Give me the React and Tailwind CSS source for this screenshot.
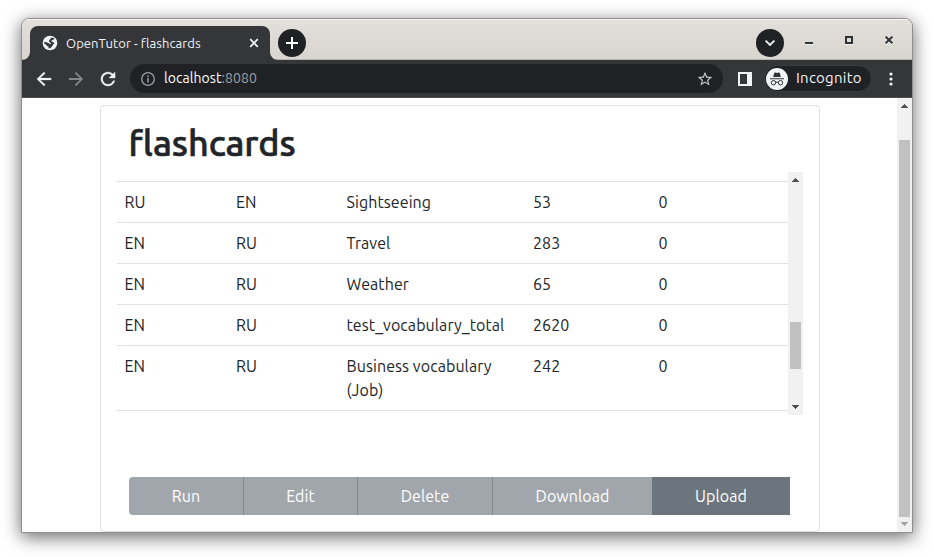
import React from "react";

const rows = [
  ["RU", "EN", "Sightseeing", "53", "0"],
  ["EN", "RU", "Travel", "283", "0"],
  ["EN", "RU", "Weather", "65", "0"],
  ["EN", "RU", "test_vocabulary_total", "2620", "0"],
  ["EN", "RU", "Business vocabulary (Job)", "242", "0"],
];

function Arrow({ down, className }) {
  return (
    <svg width="7" height="4" viewBox="0 0 7 4" className={className} shapeRendering="crispEdges">
      <path d={down ? "M0 0h7v1H0zM1 1h5v1H1zM2 2h3v1H2zM3 3h1v1H3z" : "M3 0h1v1H3zM2 1h3v1H2zM1 2h5v1H1zM0 3h7v1H0z"} fill="currentColor" />
    </svg>
  );
}

function TabStrip() {
  return (
    <div className="flex h-[41px] items-end bg-linear-to-b from-[#e3e0dc] to-[#d8d4ce] shadow-[inset_0_1px_0_#f5f4f2,inset_0_-1px_0_#bdb5ae]">
      <svg width="8" height="8" className="shrink-0"><path d="M8 0v8H0a8 8 0 0 0 8-8z" fill="#35363a" /></svg>
      <div className="flex h-[34px] w-[240px] items-center rounded-t-lg bg-[#35363a] pl-[12px] pr-[11px] text-[#f1f3f4]">
        <svg width="16" height="16" viewBox="0 0 16 16">
          <circle cx="8" cy="8" r="7.300" fill="#f1f3f4" />
          <path d="M9 2.400L12.400 3.300 11.800 4.600 9.600 5.400 9.300 6.600 11.600 7.200 12.300 8.500 11 9.500 10 11.600 8.200 13.200 6.200 13.200 6.800 11.800 5.400 11.200 4 9.800 2.200 8.400 2.400 6.800 5.200 7.600 8.400 9.200 9 8.300 7.200 6.900 7.200 5 8.600 4z" fill="#35363a" />
        </svg>
        <span className="ml-2 whitespace-nowrap text-[13px] leading-4 tracking-[0.08px]">OpenTutor - flashcards</span>
        <svg width="10" height="10" viewBox="0 0 10 10" className="ml-auto" stroke="#f1f3f4" strokeWidth="1.700"><path d="M1.200 1.200l7.600 7.600M8.800 1.200L1.200 8.800" /></svg>
      </div>
      <svg width="8" height="8" className="shrink-0"><path d="M0 0v8h8a8 8 0 0 1-8-8z" fill="#35363a" /></svg>
      <div className="mb-[3px] flex size-7 items-center justify-center rounded-full bg-[#202124]">
        <svg width="12" height="12" viewBox="0 0 12 12" stroke="#fff" strokeWidth="2"><path d="M6 0v12M0 6h12" /></svg>
      </div>
      <div className="mr-[21px] mb-[3px] ml-auto flex size-7 items-center justify-center rounded-full bg-[#202124]">
        <svg width="10" height="6" viewBox="0 0 10 6" fill="none" stroke="#f1f3f4" strokeWidth="1.800"><path d="M.6.6L5 5 9.400.6" /></svg>
      </div>
      <div className="mr-[19px] mb-[15px] flex w-[88px] justify-between">
        <svg width="8" height="9" shapeRendering="crispEdges"><path d="M0 6h8v2H0z" fill="#2e3436" /><path d="M0 8h8v1H0z" fill="#f5f3f1" /></svg>
        <svg width="8" height="9" shapeRendering="crispEdges"><path d="M0 8h8v1H0z" fill="#f5f3f1" /><rect x="1" y="1" width="6" height="6" fill="none" stroke="#2e3436" strokeWidth="2" /></svg>
        <svg width="8" height="9" stroke="#2e3436" strokeWidth="2"><path d="M.6 1.600l6.800 6.800M7.400 1.600L.6 8.400" stroke="#f5f3f1" /><path d="M.6.6l6.800 6.800M7.400.6L.6 7.400" /></svg>
      </div>
    </div>
  );
}

function Toolbar() {
  return (
    <div className="flex h-[38px] items-center border-b border-[#4c4d50] bg-[#35363a] pl-[14px]">
      <svg width="16" height="16" viewBox="3 3 18 18" fill="#f1f3f4" stroke="#f1f3f4" strokeWidth=".3"><path d="M20 11H7.830l5.590-5.590L12 4l-8 8 8 8 1.410-1.410L7.830 13H20v-2z" /></svg>
      <svg width="16" height="16" viewBox="3 3 18 18" fill="#86878a" className="ml-4"><path d="M12 4l-1.410 1.410L16.170 11H4v2h12.170l-5.580 5.590L12 20l8-8z" /></svg>
      <svg width="16" height="16" viewBox="3 3 18 18" fill="#f1f3f4" stroke="#f1f3f4" strokeWidth=".3" className="ml-4"><path d="M17.650 6.350A7.958 7.958 0 0 0 12 4a8 8 0 1 0 7.730 10h-2.080A5.990 5.990 0 0 1 12 18a6 6 0 1 1 0-12c1.660 0 3.140.69 4.220 1.780L13 11h7V4l-2.350 2.350z" /></svg>
      <div className="ml-[14px] flex h-[29px] w-[593px] items-center rounded-full bg-[#202124] pr-[10px] pl-[11px]">
        <svg width="14" height="14" viewBox="0 0 14 14" fill="none" stroke="#9aa0a6"><circle cx="7" cy="7" r="6.300" strokeWidth="1.300" /><path d="M7 6v4.500M7 3.400v1.500" strokeWidth="1.500" /></svg>
        <span className="mb-[2px] ml-[9px] whitespace-nowrap text-[14px] leading-5 tracking-[0.07px] text-white">localhost<span className="text-[#9aa0a6]">:8080</span></span>
        <svg width="16" height="16" viewBox="1 1 22 22" className="ml-auto" fill="#c3c5c8"><path d="M22 9.240l-7.190-.62L12 2 9.190 8.630 2 9.240l5.460 4.730L5.820 21 12 17.270 18.180 21l-1.630-7.030L22 9.240zM12 15.400l-3.760 2.270 1-4.280-3.320-2.880 4.380-.38L12 6.100l1.710 4.040 4.380.38-3.320 2.880 1 4.280L12 15.400z" /></svg>
      </div>
      <svg width="14" height="14" className="ml-[15px]" shapeRendering="crispEdges"><path fillRule="evenodd" d="M0 0h14v14H0zM2 2v10h7V2z" fill="#f1f3f4" /></svg>
      <div className="ml-3 flex h-[27px] w-[107.500px] items-center rounded-full border border-[#3b3c40] bg-[#202124] pl-px">
        <svg width="22" height="22" viewBox="0 0 22 22" className="shrink-0">
          <circle cx="11" cy="11" r="11" fill="#f1f3f4" />
          <path d="M7.200 8.900l1-3.800c.2-.6.7-.8 1.200-.6l1.600.5 1.600-.5c.5-.2 1 0 1.200.6l1 3.800zM4 10.200h14v1H4z" fill="#303134" />
          <g fill="none" stroke="#303134"><circle cx="7.500" cy="14.700" r="2.200" /><circle cx="14.500" cy="14.700" r="2.200" /><path d="M9.700 14.500q1.300-.8 2.600 0" /></g>
        </svg>
        <span className="mb-[2px] ml-2 text-[15px] leading-5 tracking-[0.25px] text-[#f1f3f4]">Incognito</span>
      </div>
      <svg width="4" height="14" viewBox="0 0 4 14" className="ml-[17px]" fill="#f1f3f4"><circle cx="2" cy="2" r="1.600" /><circle cx="2" cy="7" r="1.600" /><circle cx="2" cy="12" r="1.600" /></svg>
    </div>
  );
}

function FlashcardTable() {
  return (
    <div className="mt-[9px] ml-4 flex h-[243px] w-[686px] overflow-hidden">
      <div className="flex-1 pt-[9px]">
        <div className="border-t border-[#dee2e6]">
          {rows.map((r, i) => (
            <div key={i} className="grid grid-cols-[111.500px_110.500px_186.500px_125.500px_1fr] border-b border-[#dee2e6] text-[16px] leading-6 tracking-[0.08px]">
              {r.map((c, j) => (
                <div key={j} className="py-2 pr-2 pl-[7.500px]">{c}</div>
              ))}
            </div>
          ))}
        </div>
      </div>
      <div className="flex w-[15px] flex-col items-center bg-[#f1f1f1] text-[#505050]">
        <Arrow className="mt-[6px]" />
        <div className="mt-[140px] h-[47px] w-[11px] bg-[#c1c1c1]" />
        <Arrow down className="mt-auto mb-[6px]" />
      </div>
    </div>
  );
}

function Actions() {
  const base = "flex items-center justify-center border-r border-[#81868d] bg-[#a1a6ac] ";
  return (
    <div className="mt-[62px] ml-7 flex h-[38px] w-[661px] overflow-hidden rounded-l text-[16px] leading-6 tracking-[0.06px] text-white">
      <div className={base + "w-[115px]"}>Run</div>
      <div className={base + "w-[114px]"}>Edit</div>
      <div className={base + "w-[135px]"}>Delete</div>
      <div className="flex w-[159px] items-center justify-center bg-[#a1a6ac]">Download</div>
      <div className="flex flex-1 items-center justify-center bg-[#6c757d]">Upload</div>
    </div>
  );
}

export default function App() {
  return (
    <div className="h-[557px] w-[934px] overflow-hidden bg-white pt-[18px] pl-[21px] font-['Ubuntu','Noto_Sans',sans-serif]">
      <div className="h-[515px] w-[892px] overflow-hidden rounded-t-[8px] border border-[#8f8f8d] bg-white shadow-[0_4px_18px_0_rgba(0,0,0,0.6)]">
        <TabStrip />
        <Toolbar />
        <div className="flex h-[434px] text-[#212529]">
          <div className="flex-1 pt-[7px] pl-[78px]">
            <div className="h-[427px] w-[720px] rounded border border-[#dfdfdf]">
              <h1 className="mt-[15px] ml-[27.500px] h-[42px] text-[36px] leading-[43px] font-medium tracking-[-0.05px] [font-variant-ligatures:none] [-webkit-text-stroke:0.6px_#212529]">flashcards</h1>
              <FlashcardTable />
              <Actions />
            </div>
          </div>
          <div className="flex w-[15px] flex-col items-center bg-[#f1f1f1] text-[#505050]">
            <Arrow className="mt-[6px]" />
            <div className="mt-8 h-[377px] w-[11px] bg-[#c1c1c1]" />
            <Arrow down className="mt-auto mb-[6px] text-[#a3a3a3]" />
          </div>
        </div>
      </div>
    </div>
  );
}
